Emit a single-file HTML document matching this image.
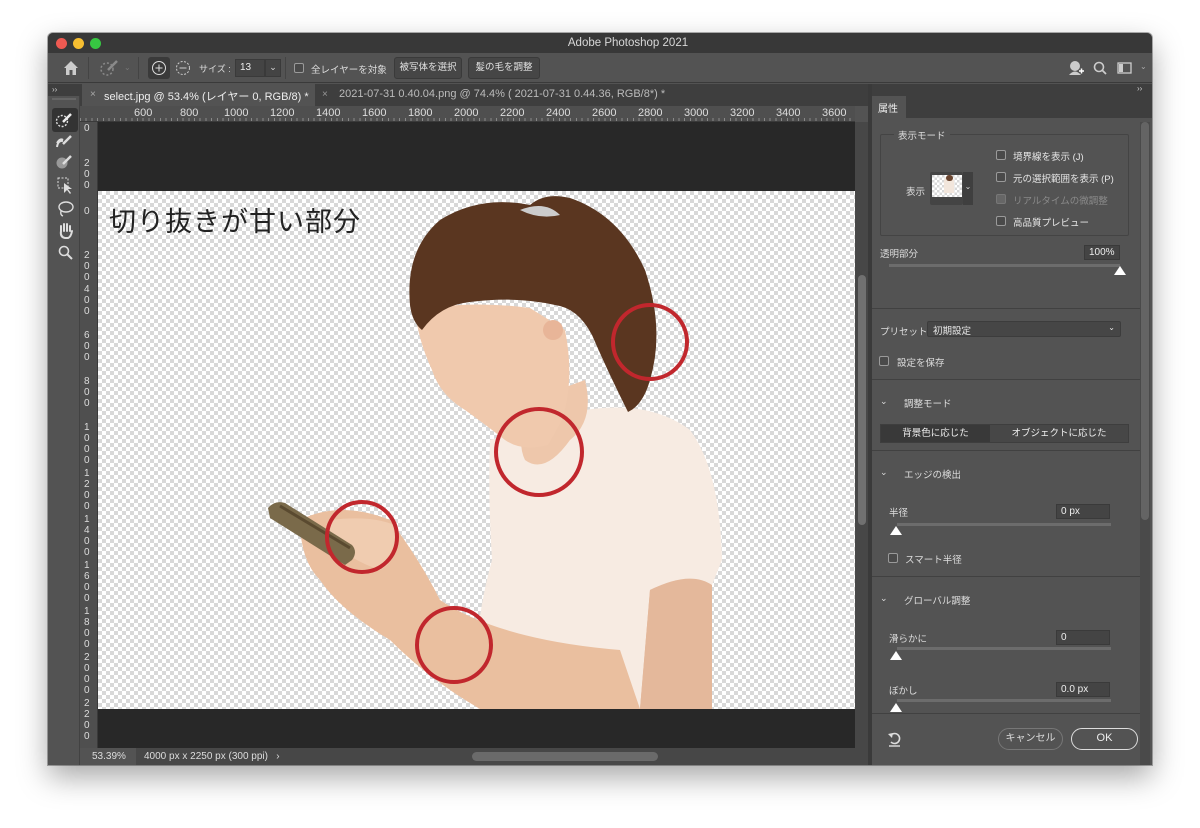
<!DOCTYPE html>
<html><head><meta charset="utf-8"><style>
*{margin:0;padding:0;box-sizing:border-box}
body{width:1200px;height:828px;background:#fff;position:relative;overflow:hidden;font-family:"Liberation Sans","Noto Sans CJK JP",sans-serif;color:#ddd;font-size:10px}
.a{position:absolute}
.win{left:48px;top:33px;width:1104px;height:732px;background:#535353;box-shadow:0 12px 30px rgba(0,0,0,.35),0 0 0 1px rgba(0,0,0,.3);border-radius:5px 5px 0 0;overflow:hidden}
.btn{background:#464646;border:1px solid #3a3a3a;border-radius:3px;color:#e0e0e0;font-size:9.5px;text-align:center;line-height:20px;height:22px}
.cb{width:10px;height:10px;border:1px solid #9a9a9a;border-radius:2px;background:#4a4a4a}
.inp{background:#444;border:1px solid #3a3a3a;color:#eee;font-size:10px;padding-left:4px;line-height:14px;height:15px}
.track{height:3px;background:#6c6c6c}
.thumb{width:0;height:0;border-left:6px solid transparent;border-right:6px solid transparent;border-bottom:9px solid #fff}
.sep{height:1px;background:#414141}
.rn{color:#ddd;font-size:11px}
.chk{background:repeating-conic-gradient(#fff 0 25%,#d8d8d8 0 50%) 0 0/8px 8px}
</style></head><body>
<div class="a win"></div>
<div class="a" style="left:48px;top:33px;width:1104px;height:20px;background:#383838;border-radius:5px 5px 0 0"></div>
<div class="a" style="left:56px;top:38px;width:11px;height:11px;border-radius:50%;background:#ee5a52"></div>
<div class="a" style="left:73px;top:38px;width:11px;height:11px;border-radius:50%;background:#f6be31"></div>
<div class="a" style="left:90px;top:38px;width:11px;height:11px;border-radius:50%;background:#37c742"></div>
<div class="a" style="left:0;top:37px;width:1200px;text-align:center;font-size:11.5px;color:#d8d8d8;padding-left:56px">Adobe Photoshop 2021</div>
<div class="a" style="left:48px;top:53px;width:1104px;height:30px;background:#535353;border-bottom:1px solid #3a3a3a"></div>
<svg class="a" style="left:62px;top:59px" width="18" height="18" viewBox="0 0 18 18"><path d="M2 9 L9 2 L16 9 L14 9 L14 16 L10.5 16 L10.5 11 L7.5 11 L7.5 16 L4 16 L4 9Z" fill="#ccc"/></svg>
<div class="a" style="left:88px;top:57px;width:1px;height:22px;background:#444"></div>
<svg class="a" style="left:99px;top:58px" width="22" height="20" viewBox="0 0 22 20"><circle cx="8" cy="11" r="6" fill="none" stroke="#8a8a8a" stroke-width="1.5" stroke-dasharray="2 2"/><path d="M9 12 L18 3" stroke="#8a8a8a" stroke-width="2.5"/></svg>
<div class="a" style="left:124px;top:63px;color:#777;font-size:8px">⌄</div>
<div class="a" style="left:138px;top:57px;width:1px;height:22px;background:#444"></div>
<div class="a" style="left:148px;top:57px;width:22px;height:22px;background:#3a3a3a;border-radius:3px"></div>
<svg class="a" style="left:151px;top:60px" width="16" height="16"><circle cx="8" cy="8" r="6.5" fill="none" stroke="#ddd"/><path d="M8 4.5V11.5M4.5 8H11.5" stroke="#ddd"/></svg>
<svg class="a" style="left:175px;top:60px" width="16" height="16"><circle cx="8" cy="8" r="6.5" fill="none" stroke="#ccc" stroke-dasharray="2 1.5"/><path d="M4.5 8H11.5" stroke="#ccc"/></svg>
<div class="a" style="left:199px;top:62px;font-size:9px;color:#ddd">サイズ :</div>
<div class="a inp" style="left:235px;top:59px;width:30px;height:18px;line-height:16px">13</div>
<div class="a" style="left:265px;top:59px;width:16px;height:18px;background:#444;border:1px solid #3a3a3a;font-size:9px;text-align:center;line-height:14px">⌄</div>
<div class="a" style="left:285px;top:57px;width:1px;height:22px;background:#444"></div>
<div class="a cb" style="left:294px;top:63px"></div>
<div class="a" style="left:311px;top:62px;font-size:9.5px">全レイヤーを対象</div>
<div class="a btn" style="left:394px;top:57px;width:68px">被写体を選択</div>
<div class="a btn" style="left:468px;top:57px;width:72px">髪の毛を調整</div>
<svg class="a" style="left:1067px;top:59px" width="18" height="18"><circle cx="8" cy="7" r="5" fill="#ccc"/><path d="M2 16 Q8 9 14 16Z" fill="#ccc"/><path d="M12 12H17M14.5 9.5V14.5" stroke="#fff" stroke-width="1.5"/></svg>
<svg class="a" style="left:1092px;top:60px" width="16" height="16"><circle cx="7" cy="7" r="4.5" fill="none" stroke="#ccc" stroke-width="1.6"/><path d="M10.5 10.5L14 14" stroke="#ccc" stroke-width="1.8"/></svg>
<svg class="a" style="left:1117px;top:61px" width="16" height="14"><rect x="1" y="2" width="13" height="10" fill="none" stroke="#ccc" stroke-width="1.3"/><rect x="2" y="3" width="4" height="8" fill="#ccc"/></svg>
<div class="a" style="left:1140px;top:62px;font-size:8px;color:#aaa">⌄</div>
<div class="a" style="left:48px;top:84px;width:820px;height:22px;background:#3e3e3e"></div>
<div class="a" style="left:52px;top:85px;font-size:8px;color:#ccc">››</div>
<div class="a" style="left:82px;top:84px;width:233px;height:22px;background:#535353"></div>
<div class="a" style="left:90px;top:89px;color:#aaa;font-size:10px">×</div>
<div class="a" style="left:104px;top:88px;font-size:11px;color:#eee">select.jpg @ 53.4% (レイヤー 0, RGB/8) *</div>
<div class="a" style="left:322px;top:89px;color:#999;font-size:10px">×</div>
<div class="a" style="left:339px;top:88px;font-size:11px;color:#bbb;white-space:nowrap">2021-07-31 0.40.04.png @ 74.4% ( 2021-07-31 0.44.36, RGB/8*) *</div>
<div class="a" style="left:48px;top:96px;width:32px;height:669px;background:#535353;border-right:1px solid #424242"></div>
<div class="a" style="left:52px;top:98px;width:24px;height:2px;background:#666"></div>
<div class="a" style="left:52px;top:108px;width:26px;height:24px;background:#333;border-radius:3px"></div>
<svg class="a" style="left:54px;top:110px" width="22" height="20"><circle cx="8" cy="11" r="5.5" fill="none" stroke="#ddd" stroke-width="1.4" stroke-dasharray="2 1.5"/><path d="M9 12L17 4" stroke="#eee" stroke-width="2.5"/></svg>
<svg class="a" style="left:54px;top:132px" width="22" height="20"><path d="M3 15Q4 8 9 9" stroke="#ddd" stroke-width="2" fill="none"/><path d="M3 11Q6 6 9 8" stroke="#ddd" stroke-width="2" fill="none"/><path d="M9 12L17 4" stroke="#ddd" stroke-width="2.5"/></svg>
<svg class="a" style="left:54px;top:152px" width="22" height="20"><circle cx="8" cy="11" r="5.5" fill="#999"/><path d="M9 12L17 4" stroke="#ddd" stroke-width="2.5"/></svg>
<svg class="a" style="left:56px;top:176px" width="20" height="20"><rect x="2" y="2" width="10" height="10" fill="none" stroke="#ddd" stroke-dasharray="2 1.5"/><path d="M8 7L8 17L11 14L14 18L15 17L12 13L16 13Z" fill="#ddd"/></svg>
<svg class="a" style="left:56px;top:199px" width="20" height="20"><ellipse cx="10" cy="8" rx="7" ry="5" fill="none" stroke="#ddd" stroke-width="1.4"/><path d="M5 12Q4 16 7 17" stroke="#ddd" fill="none" stroke-width="1.4"/></svg>
<svg class="a" style="left:57px;top:222px" width="18" height="18"><path d="M4 9V4M7 9V2M10 9V2M13 9V4M4 9Q3 15 8 16H11Q14 15 15 9" stroke="#ddd" stroke-width="2" fill="none" stroke-linecap="round"/></svg>
<svg class="a" style="left:57px;top:244px" width="18" height="18"><circle cx="7" cy="7" r="4.5" fill="none" stroke="#ddd" stroke-width="1.6"/><path d="M10.5 10.5L15 15" stroke="#ddd" stroke-width="2"/></svg>
<div class="a" style="left:80px;top:106px;width:775px;height:16px;background:#4f4f4f;border-bottom:1px solid #3a3a3a;background-image:repeating-linear-gradient(90deg,#888 0 1px,transparent 1px 5.7px);background-size:100% 4px;background-repeat:no-repeat;background-position:0 12px"></div>
<div class="a rn" style="left:80px;top:107px;width:775px;height:15px;white-space:nowrap">
<span class="a" style="left:54px">600</span><span class="a" style="left:100px">800</span><span class="a" style="left:144px">1000</span><span class="a" style="left:190px">1200</span><span class="a" style="left:236px">1400</span><span class="a" style="left:282px">1600</span><span class="a" style="left:328px">1800</span><span class="a" style="left:374px">2000</span><span class="a" style="left:420px">2200</span><span class="a" style="left:466px">2400</span><span class="a" style="left:512px">2600</span><span class="a" style="left:558px">2800</span><span class="a" style="left:604px">3000</span><span class="a" style="left:650px">3200</span><span class="a" style="left:696px">3400</span><span class="a" style="left:742px">3600</span></div>
<div class="a" style="left:80px;top:122px;width:18px;height:626px;background:#4f4f4f;border-right:1px solid #3a3a3a"></div>
<div class="a rn" style="left:84px;top:122px;width:10px;font-size:10px;line-height:11px;text-align:center">
<div class="a" style="top:1px">0</div>
<div class="a" style="top:36px">2<br>0<br>0</div>
<div class="a" style="top:84px">0</div>
<div class="a" style="top:128px">2<br>0<br>0</div>
<div class="a" style="top:162px">4<br>0<br>0</div>
<div class="a" style="top:208px">6<br>0<br>0</div>
<div class="a" style="top:254px">8<br>0<br>0</div>
<div class="a" style="top:300px">1<br>0<br>0<br>0</div>
<div class="a" style="top:346px">1<br>2<br>0<br>0</div>
<div class="a" style="top:392px">1<br>4<br>0<br>0</div>
<div class="a" style="top:438px">1<br>6<br>0<br>0</div>
<div class="a" style="top:484px">1<br>8<br>0<br>0</div>
<div class="a" style="top:530px">2<br>0<br>0<br>0</div>
<div class="a" style="top:576px">2<br>2<br>0<br>0</div>
</div>
<div class="a" style="left:98px;top:122px;width:757px;height:626px;background:#282828"></div>
<div class="a chk" style="left:98px;top:191px;width:757px;height:518px"></div>
<svg class="a" style="left:0;top:0" width="1200" height="828">
<defs><clipPath id="c"><rect x="98" y="191" width="757" height="518"/></clipPath></defs>
<g clip-path="url(#c)">
<path d="M618 560 Q660 540 700 570 L712 709 L600 709Z" fill="#e2b79a"/>
<path d="M490 440 Q540 425 585 410 Q650 400 690 430 Q720 470 722 560 L712 585 Q680 575 650 590 L640 709 L478 709 Q470 640 492 560 Q488 500 490 440Z" fill="#f7ebe2"/>
<path d="M650 590 Q690 570 712 585 L712 709 L640 709Z" fill="#e4b89b"/>
<path d="M530 400 L585 380 Q595 420 570 440 Q545 475 525 460 Q515 440 530 400Z" fill="#eec7ab"/>
<path d="M415 310 Q470 300 530 308 L565 330 Q575 380 562 420 L548 445 Q522 452 505 440 Q482 422 465 410 Q440 395 432 370 Q418 340 415 310Z" fill="#f0c9ad"/>
<path d="M410 305 Q405 250 440 220 Q480 195 530 205 Q545 192 570 198 Q620 215 645 270 Q665 330 650 380 Q643 405 628 412 Q608 372 592 335 Q578 308 555 305 Q515 296 470 302 Q440 305 422 330 Q412 322 410 305Z" fill="#5a3620"/>
<path d="M520 210 Q545 200 560 215 Q540 220 520 210Z" fill="#ccc"/>
<circle cx="553" cy="330" r="10" fill="#e8b598"/>
<path d="M300 520 Q340 500 390 520 Q420 560 440 600 Q500 640 620 650 L640 709 L480 709 Q430 680 390 640 Q340 610 320 580 Q300 560 300 520Z" fill="#eabf9f"/>
<path d="M330 520 Q370 515 395 525 Q400 560 380 570 Q350 560 330 540Z" fill="#f0ccb0"/>
<path d="M268 508 Q275 500 285 503 L352 545 Q358 552 352 560 L345 565 L270 518Z" fill="#7a6a4a"/>
<path d="M280 506 L350 548" stroke="#5a4a30" stroke-width="3"/>
</g>
<g fill="none" stroke="#c1272d" stroke-width="4">
<circle cx="650" cy="342" r="37"/><circle cx="539" cy="452" r="43"/><circle cx="362" cy="537" r="35"/><circle cx="454" cy="645" r="37"/>
</g>
</svg>
<div class="a" style="left:109px;top:200px;font-size:27px;color:#222;letter-spacing:1px">切り抜きが甘い部分</div>
<div class="a" style="left:855px;top:122px;width:13px;height:626px;background:#474747"></div>
<div class="a" style="left:858px;top:275px;width:8px;height:250px;background:#707070;border-radius:4px"></div>
<div class="a" style="left:80px;top:748px;width:788px;height:17px;background:#474747"></div>
<div class="a" style="left:80px;top:748px;width:56px;height:17px;background:#535353"></div>
<div class="a" style="left:92px;top:751px;font-size:10px;color:#ddd">53.39%</div>
<div class="a" style="left:144px;top:751px;font-size:10px;color:#ddd">4000 px x 2250 px (300 ppi)&nbsp;&nbsp;&nbsp;›</div>
<div class="a" style="left:472px;top:752px;width:186px;height:9px;background:#6a6a6a;border-radius:5px"></div>
<div class="a" style="left:868px;top:84px;width:4px;height:681px;background:#3a3a3a"></div>
<div class="a" style="left:872px;top:84px;width:280px;height:34px;background:#3e3e3e"></div>
<div class="a" style="left:1137px;top:84px;font-size:8px;color:#ccc">››</div>
<div class="a" style="left:872px;top:96px;width:34px;height:22px;background:#535353;font-size:10px;color:#eee;padding:4px 0 0 6px">属性</div>
<div class="a" style="left:872px;top:118px;width:280px;height:647px;background:#535353"></div>
<div class="a" style="left:1140px;top:122px;width:10px;height:643px;background:#4a4a4a"></div>
<div class="a" style="left:1141px;top:122px;width:8px;height:398px;background:#646464;border-radius:4px"></div>
<div class="a" style="left:880px;top:134px;width:249px;height:102px;border:1px solid #444;border-radius:2px"></div>
<div class="a" style="left:894px;top:128px;background:#535353;padding:0 4px;font-size:9.5px">表示モード</div>
<div class="a" style="left:906px;top:184px;font-size:9.5px">表示</div>
<div class="a" style="left:930px;top:172px;width:33px;height:33px;background:#444;border-radius:2px"></div>
<div class="a chk" style="left:932px;top:175px;width:30px;height:22px;background-size:5px 5px"></div>
<div class="a" style="left:944px;top:177px;width:10px;height:16px;background:#f2e6dc;border-radius:4px 4px 0 0"></div>
<div class="a" style="left:946px;top:175px;width:7px;height:6px;background:#6a4530;border-radius:3px"></div>
<div class="a" style="left:963px;top:172px;width:10px;height:33px;background:#3f3f3f;font-size:8px;text-align:center;line-height:30px">⌄</div>
<div class="a cb" style="left:996px;top:150px"></div><div class="a" style="left:1013px;top:149px;font-size:9.5px;color:#e6e6e6">境界線を表示 (J)</div>
<div class="a cb" style="left:996px;top:172px"></div><div class="a" style="left:1013px;top:171px;font-size:9.5px;color:#e6e6e6">元の選択範囲を表示 (P)</div>
<div class="a cb" style="left:996px;top:194px;border-color:#777;background:#666"></div><div class="a" style="left:1013px;top:193px;font-size:9.5px;color:#8a8a8a">リアルタイムの微調整</div>
<div class="a cb" style="left:996px;top:216px"></div><div class="a" style="left:1013px;top:215px;font-size:9.5px;color:#e6e6e6">高品質プレビュー</div>
<div class="a" style="left:880px;top:246px;font-size:9.5px">透明部分</div>
<div class="a inp" style="left:1084px;top:245px;width:36px">100%</div>
<div class="a track" style="left:889px;top:264px;width:231px"></div>
<div class="a thumb" style="left:1114px;top:266px"></div>
<div class="a sep" style="left:872px;top:308px;width:268px"></div>
<div class="a" style="left:880px;top:324px;font-size:9.5px">プリセット</div>
<div class="a" style="left:927px;top:321px;width:194px;height:16px;background:#464646;border:1px solid #3c3c3c;border-radius:2px;font-size:9.5px;padding:1px 5px;color:#e6e6e6">初期設定<span style="float:right;font-size:8px">⌄</span></div>
<div class="a cb" style="left:879px;top:356px"></div><div class="a" style="left:897px;top:355px;font-size:9.5px">設定を保存</div>
<div class="a sep" style="left:872px;top:379px;width:268px"></div>
<div class="a" style="left:880px;top:396px;font-size:9px">⌄</div><div class="a" style="left:904px;top:396px;font-size:9.5px">調整モード</div>
<div class="a" style="left:880px;top:424px;width:249px;height:19px;background:#474747;border:1px solid #3e3e3e"></div>
<div class="a" style="left:881px;top:425px;width:109px;height:17px;background:#393939;text-align:center;font-size:9.5px;line-height:17px;color:#eee">背景色に応じた</div>
<div class="a" style="left:990px;top:425px;width:138px;height:17px;text-align:center;font-size:9.5px;line-height:17px;color:#eee">オブジェクトに応じた</div>
<div class="a sep" style="left:872px;top:450px;width:268px"></div>
<div class="a" style="left:880px;top:467px;font-size:9px">⌄</div><div class="a" style="left:904px;top:467px;font-size:9.5px">エッジの検出</div>
<div class="a" style="left:889px;top:505px;font-size:9.5px">半径</div>
<div class="a inp" style="left:1056px;top:504px;width:54px">0 px</div>
<div class="a track" style="left:897px;top:523px;width:214px"></div>
<div class="a thumb" style="left:890px;top:526px"></div>
<div class="a cb" style="left:888px;top:553px"></div><div class="a" style="left:905px;top:552px;font-size:9.5px">スマート半径</div>
<div class="a sep" style="left:872px;top:576px;width:268px"></div>
<div class="a" style="left:880px;top:593px;font-size:9px">⌄</div><div class="a" style="left:904px;top:593px;font-size:9.5px">グローバル調整</div>
<div class="a" style="left:889px;top:631px;font-size:9.5px">滑らかに</div>
<div class="a inp" style="left:1056px;top:630px;width:54px">0</div>
<div class="a track" style="left:897px;top:647px;width:214px"></div>
<div class="a thumb" style="left:890px;top:651px"></div>
<div class="a" style="left:889px;top:683px;font-size:9.5px">ぼかし</div>
<div class="a inp" style="left:1056px;top:682px;width:54px">0.0 px</div>
<div class="a track" style="left:897px;top:699px;width:214px"></div>
<div class="a thumb" style="left:890px;top:703px"></div>
<div class="a" style="left:872px;top:713px;width:268px;height:1px;background:#414141"></div>
<svg class="a" style="left:886px;top:730px" width="18" height="18"><path d="M5 5A5 5 0 1 1 5 12" fill="none" stroke="#ddd" stroke-width="1.6"/><path d="M2 4L7 3L6 8Z" fill="#ddd"/><path d="M3 16H14" stroke="#ddd" stroke-width="1.4"/></svg>
<div class="a" style="left:998px;top:728px;width:65px;height:22px;border:1px solid #777;border-radius:11px;text-align:center;line-height:20px;font-size:10px;color:#ddd">キャンセル</div>
<div class="a" style="left:1071px;top:728px;width:67px;height:22px;border:1.5px solid #ddd;border-radius:11px;text-align:center;line-height:19px;font-size:11px;color:#eee">OK</div>
</body></html>
